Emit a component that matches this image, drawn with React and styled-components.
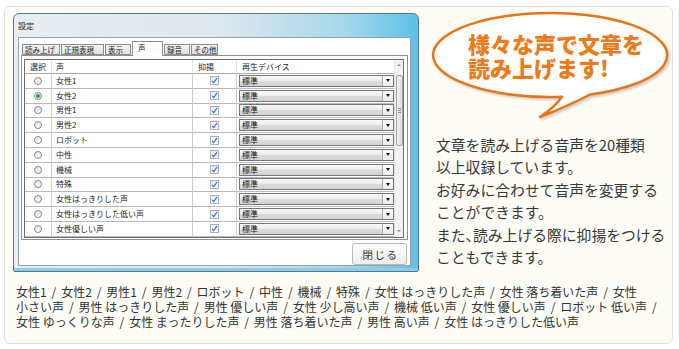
import React from "react";
import styled, { createGlobalStyle } from "styled-components";

const GlobalStyle = createGlobalStyle`
  html, body {
    margin: 0;
    padding: 0;
    background: #fff;
  }
  body {
    font-family: "Noto Sans CJK JP", "Noto Sans", sans-serif;
    color: #333;
  }
`;

const Page = styled.div`
  padding: 6px 0 0 4px;
`;

const Card = styled.div`
  box-sizing: border-box;
  width: 669px;
  height: 338px;
  border: 1px solid #e0e0da;
  border-radius: 6px;
  background: #fdfdf6;
  padding: 6px 0 0 8px;
`;

const TopRow = styled.div`
  display: flex;
  align-items: flex-start;
  gap: 9px;
`;

/* ---- settings window ---- */

const Window = styled.div`
  box-sizing: border-box;
  width: 406px;
  height: 259px;
  display: flex;
  flex-direction: column;
  border: 1px solid #56788f;
  border-radius: 6px 6px 2px 2px;
  padding: 0 7px 5px 4px;
  background: linear-gradient(
    to right,
    #e8edf1 0%,
    #dfe8ee 50%,
    #a6d8ec 82%,
    #5cc1e6 100%
  );
  box-shadow: inset 0 -3px 0 #8fcbe6;
`;

const TitleBar = styled.div`
  height: 23px;
  display: flex;
  align-items: center;
  font-size: 8px;
  color: #1e1e1e;
`;

const Client = styled.div`
  box-sizing: border-box;
  height: 229px;
  display: flex;
  flex-direction: column;
  border: 1px solid #8fa4b5;
  background: #fff;
  padding: 3px 2px 0 2px;
`;

const TabStrip = styled.div`
  display: flex;
  align-items: flex-end;
  gap: 1px;
  height: 14px;
  padding-left: 1px;
  position: relative;
  z-index: 1;
`;

const Tab = styled.div`
  box-sizing: border-box;
  width: ${(p) => p.$w}px;
  height: ${(p) => (p.$active ? 15 : 11)}px;
  margin-bottom: ${(p) => (p.$active ? -1 : 0)}px;
  display: flex;
  align-items: ${(p) => (p.$active ? "flex-start" : "center")};
  padding: ${(p) => (p.$active ? "2px 0 0 5px" : "0 0 0 2px")};
  border: 1px solid #8c8c8c;
  border-bottom: ${(p) => (p.$active ? "none" : "1px solid #8c8c8c")};
  background: ${(p) =>
    p.$active ? "#fff" : "linear-gradient(#f6f6f6, #dddddd)"};
  font-size: 7.5px;
  line-height: 1;
  color: #1e1e1e;
  white-space: nowrap;
  overflow: hidden;
`;

const Panel = styled.div`
  box-sizing: border-box;
  height: 185px;
  border: 1px solid #909090;
  padding: 3px 3px 0 2px;
`;

const Table = styled.div`
  display: flex;
  border: 1px solid #6f6f6f;
`;

const Rows = styled.div`
  display: flex;
  flex-direction: column;
`;

const Row = styled.div`
  display: grid;
  grid-template-columns: 27px 141px 44px 157px;
  height: ${(p) => p.$h}px;
`;

const Cell = styled.div`
  box-sizing: border-box;
  display: flex;
  align-items: center;
  justify-content: ${(p) => (p.$center ? "center" : "flex-start")};
  padding-left: ${(p) => p.$pad || 0}px;
  border-right: ${(p) =>
    p.$last ? "none" : `1px solid ${p.$head ? "#e4e4e4" : "#cfcfcf"}`};
  border-bottom: 1px solid ${(p) => (p.$head ? "#a8a8a8" : "#b9b9b9")};
  font-size: 8px;
  line-height: 1;
  color: #1e1e1e;
  white-space: nowrap;
  overflow: hidden;
`;

const Radio = styled.span`
  box-sizing: border-box;
  width: 8px;
  height: 8px;
  border-radius: 50%;
  border: 1px solid #7c8a97;
  background: ${(p) =>
    p.$on
      ? "radial-gradient(circle, #239b3a 0 1.4px, #8fd39b 2px, #f4f6f8 2.6px)"
      : "linear-gradient(#e6eaee, #fbfbfb)"};
`;

const Check = styled.span`
  box-sizing: border-box;
  width: 9px;
  height: 9px;
  display: flex;
  align-items: center;
  justify-content: center;
  border: 1px solid #a9b1b9;
  background: linear-gradient(#e7ebef, #f5f6f8);
`;

const Combo = styled.div`
  box-sizing: border-box;
  width: 155px;
  height: 12px;
  margin-left: 2px;
  display: flex;
  border: 1px solid #767676;
  background: linear-gradient(
    #f8f8f8 0%,
    #ededed 45%,
    #dcdcdc 52%,
    #d3d3d3 100%
  );
`;

const ComboLabel = styled.span`
  flex: 1;
  display: flex;
  align-items: center;
  padding-left: 2px;
  font-size: 8px;
  color: #111;
`;

const ComboArrow = styled.span`
  width: 10px;
  display: flex;
  align-items: center;
  justify-content: center;
  border-left: 1px solid #ababab;
  background: linear-gradient(#fafafa, #ececec);

  &::after {
    content: "";
    border-left: 2.5px solid transparent;
    border-right: 2.5px solid transparent;
    border-top: 3px solid #111;
  }
`;

const Scrollbar = styled.div`
  width: 9px;
  display: flex;
  flex-direction: column;
  background: #f2f2f2;
  border-left: 1px solid #e4e4e4;
  box-sizing: border-box;
`;

const ScrollArrow = styled.div`
  height: ${(p) => p.$h}px;
  display: flex;
  align-items: ${(p) => (p.$down ? "flex-end" : "flex-start")};
  justify-content: center;
  padding: ${(p) => (p.$down ? "0 0 5px" : "4px 0 0")};
  box-sizing: border-box;

  &::after {
    content: "";
    border-left: 2px solid transparent;
    border-right: 2px solid transparent;
    ${(p) =>
      p.$down
        ? "border-top: 2px solid #8a8a8a;"
        : "border-bottom: 2px solid #8a8a8a;"}
  }
`;

const Track = styled.div`
  flex: 1;
  padding-top: 1px;
`;

const Thumb = styled.div`
  box-sizing: border-box;
  width: 7px;
  height: 71px;
  margin: 0 auto;
  display: flex;
  align-items: center;
  justify-content: center;
  border: 1px solid #a2a2a2;
  border-radius: 2px;
  background: linear-gradient(to right, #f4f4f4, #dcdcdc);

  &::after {
    content: "";
    width: 3px;
    height: 5px;
    background: repeating-linear-gradient(
      #8c8c8c 0 1px,
      transparent 1px 2px
    );
  }
`;

const ButtonRow = styled.div`
  display: flex;
  justify-content: flex-end;
  padding: 3px 1px 0 0;
`;

const CloseButton = styled.button`
  box-sizing: border-box;
  width: 55px;
  height: 22px;
  padding: 0 0 0 2px;
  border: 1px solid #b9b9b9;
  border-radius: 3px;
  background: linear-gradient(#fefefe, #eeeeee);
  font-family: "Noto Sans CJK JP", sans-serif;
  font-size: 10.5px;
  letter-spacing: 1.5px;
  color: #333;
`;

/* ---- right side ---- */

const Aside = styled.div`
  display: flex;
  flex-direction: column;
`;

const Bubble = styled.div`
  position: relative;
  width: 245px;
  height: 106px;

  svg {
    position: absolute;
    left: 0;
    top: 0;
    overflow: visible;
    filter: drop-shadow(2px 2px 1px rgba(0, 0, 0, 0.18));
  }
`;

const BubbleText = styled.div`
  position: relative;
  padding: 18px 0 0 40px;
  font-size: 22px;
  line-height: 24px;
  font-weight: 900;
  color: #ef7a17;
  white-space: nowrap;
`;

const Description = styled.p`
  margin: 15px 0 0;
  padding-left: 8px;
  font-size: 14.8px;
  line-height: 22.4px;
  color: #383838;
  white-space: nowrap;
`;

const Narrow = styled.span`
  font-feature-settings: "halt";
`;

const VoiceList = styled.div`
  margin-top: 12px;
  padding-left: 3px;
  font-size: 12px;
  line-height: 15px;
  color: #333;
  white-space: nowrap;
`;

const Line = styled.span`
  display: block;
`;

const Sep = styled.span`
  padding: 0 2.2px;
`;

const tabs = [
  { label: "読み上げ", w: 38 },
  { label: "正規表現", w: 43 },
  { label: "表示", w: 26 },
  { label: "声", w: 31, active: true },
  { label: "録音", w: 26 },
  { label: "その他", w: 27 },
];

const voices = [
  "女性1",
  "女性2",
  "男性1",
  "男性2",
  "ロボット",
  "中性",
  "機械",
  "特殊",
  "女性はっきりした声",
  "女性はっきりした低い声",
  "女性優しい声",
];

const voiceLines = [
  {
    items: [
      "女性1",
      "女性2",
      "男性1",
      "男性2",
      "ロボット",
      "中性",
      "機械",
      "特殊",
      "女性 はっきりした声",
      "女性 落ち着いた声",
      "女性",
    ],
  },
  {
    items: [
      "小さい声",
      "男性 はっきりした声",
      "男性 優しい声",
      "女性 少し高い声",
      "機械 低い声",
      "女性 優しい声",
      "ロボット 低い声",
    ],
    trailing: true,
  },
  {
    items: [
      "女性 ゆっくりな声",
      "女性 まったりした声",
      "男性 落ち着いた声",
      "男性 高い声",
      "女性 はっきりした低い声",
    ],
  },
];

function CheckMark() {
  return (
    <svg width="7" height="7" viewBox="0 0 7 7">
      <path
        d="M1 3.8 L2.8 5.6 L6 1"
        fill="none"
        stroke="#3b6fd4"
        strokeWidth="1.2"
      />
    </svg>
  );
}

function SettingsWindow() {
  return (
    <Window>
      <TitleBar>設定</TitleBar>
      <Client>
        <TabStrip>
          {tabs.map((t) => (
            <Tab key={t.label} $w={t.w} $active={t.active}>
              {t.label}
            </Tab>
          ))}
        </TabStrip>
        <Panel>
          <Table>
            <Rows>
              <Row $h={14}>
                <Cell $head $pad={5}>選択</Cell>
                <Cell $head $pad={4}>声</Cell>
                <Cell $head $pad={5}>抑揚</Cell>
                <Cell $head $last $pad={5}>再生デバイス</Cell>
              </Row>
              {voices.map((v, i) => (
                <Row key={v} $h={14.8}>
                  <Cell $center>
                    <Radio $on={i === 1} />
                  </Cell>
                  <Cell $pad={4}>{v}</Cell>
                  <Cell $center>
                    <Check>
                      <CheckMark />
                    </Check>
                  </Cell>
                  <Cell $last>
                    <Combo>
                      <ComboLabel>標準</ComboLabel>
                      <ComboArrow />
                    </Combo>
                  </Cell>
                </Row>
              ))}
            </Rows>
            <Scrollbar>
              <ScrollArrow $h={14} />
              <Track>
                <Thumb />
              </Track>
              <ScrollArrow $h={12} $down />
            </Scrollbar>
          </Table>
        </Panel>
        <ButtonRow>
          <CloseButton>閉じる</CloseButton>
        </ButtonRow>
      </Client>
    </Window>
  );
}

function SpeechBubble() {
  return (
    <Bubble>
      <svg width="245" height="106" viewBox="0 0 245 106">
        <path
          d="M162 81.5 A117 42 0 1 0 134 83.8 Q126 95 112 104 Q140 93 162 81.5 Z"
          fill="#fff"
          stroke="#ea7414"
          strokeWidth="2.5"
          strokeLinejoin="round"
        />
      </svg>
      <BubbleText>
        様々な声で文章を
        <br />
        読み上げます!
      </BubbleText>
    </Bubble>
  );
}

export default function App() {
  return (
    <Page>
      <GlobalStyle />
      <Card>
        <TopRow>
          <SettingsWindow />
          <Aside>
            <SpeechBubble />
            <Description>
              文章を読み上げる音声を20種類
              <br />
              以上収録しています。
              <br />
              お好みに合わせて音声を変更する
              <br />
              ことができます。
              <br />
              また<Narrow>、</Narrow>読み上げる際に抑揚をつける
              <br />
              こともできます。
            </Description>
          </Aside>
        </TopRow>
        <VoiceList>
          {voiceLines.map((l, n) => (
            <Line key={n}>
              {l.items.map((it, i) => (
                <React.Fragment key={i}>
                  {i > 0 && <Sep> / </Sep>}
                  {it}
                </React.Fragment>
              ))}
              {l.trailing && <Sep> /</Sep>}
            </Line>
          ))}
        </VoiceList>
      </Card>
    </Page>
  );
}
